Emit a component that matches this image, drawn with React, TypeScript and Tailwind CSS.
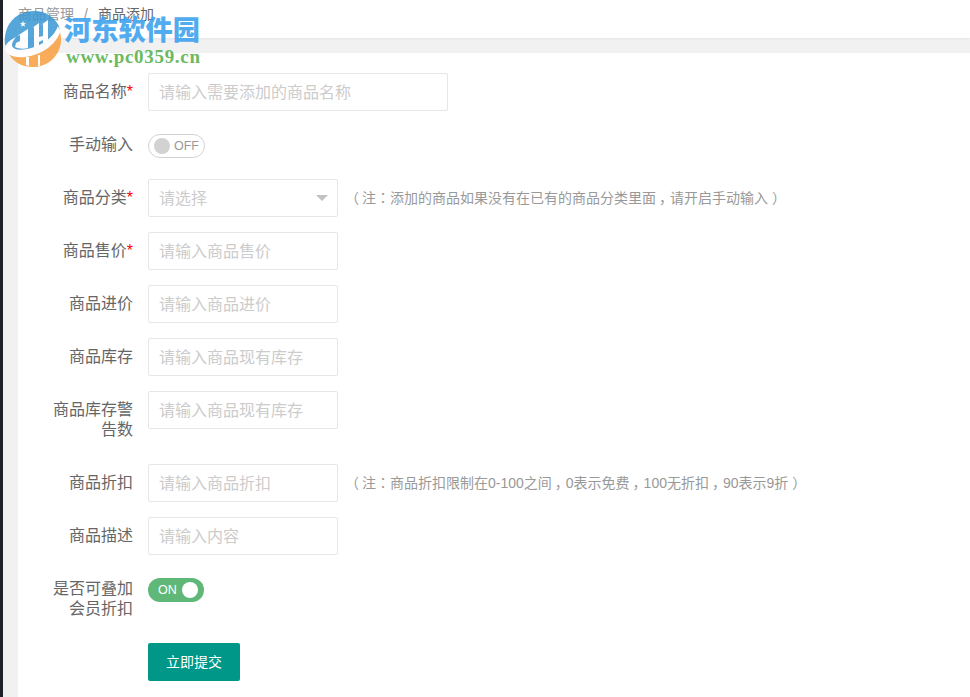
import type { ReactNode } from 'react'

interface FormRowProps {
  label: string
  required?: boolean
  children: ReactNode
}

function FormRow({ label, required, children }: FormRowProps) {
  return (
    <div className="flex items-start mb-[15px]">
      <label className="w-[110px] shrink-0 py-[9px] px-[15px] text-right text-[16px] leading-[20px] text-[#666]">
        {label}
        {required && <span className="text-[#f00]">*</span>}
      </label>
      <div className="flex items-center min-h-[38px]">{children}</div>
    </div>
  )
}

function TextInput({ placeholder, wide }: { placeholder: string; wide?: boolean }) {
  return (
    <input
      type="text"
      placeholder={placeholder}
      className={`${wide ? 'w-[300px]' : 'w-[190px]'} h-[38px] px-[10px] pt-[2px] border border-[#e6e6e6] rounded-[2px] bg-white text-[16px] placeholder:text-[#ccc] outline-none`}
    />
  )
}

function Hint({ children }: { children: ReactNode }) {
  return (
    <span className="ml-[7px] pb-[2px] text-[14px] leading-[20px] text-[#999] whitespace-nowrap">
      <span className="mr-[3px]">（</span>
      {children}
      <span className="ml-[4px]">）</span>
    </span>
  )
}

// Comma moved towards the middle of its box
function Comma() {
  return <span className="ml-[3px] -mr-[3px]">，</span>
}

function Colon() {
  return (
    <span lang="zh-TW" className="font-['Noto_Sans_CJK_TC',sans-serif]">
      ：
    </span>
  )
}

function Switch({ on }: { on?: boolean }) {
  if (on) {
    return (
      <div className="flex items-center justify-between w-[56px] h-[24px] mt-[2px] pl-[10px] pr-[6px] rounded-full bg-[#5fb878]">
        <span className="text-[12.5px] text-white">ON</span>
        <span className="w-[16px] h-[16px] rounded-full bg-white" />
      </div>
    )
  }
  return (
    <div className="flex items-center justify-between w-[57px] h-[24px] mt-[2px] pl-[5px] pr-[5px] border border-[#d2d2d2] rounded-full bg-white">
      <span className="w-[16px] h-[16px] rounded-full bg-[#d2d2d2]" />
      <span className="text-[12.5px] text-[#999]">OFF</span>
    </div>
  )
}

function Watermark() {
  return (
    <div className="absolute left-[4px] top-[10px] flex pointer-events-none">
      <svg width="60" height="58" viewBox="0 0 60 58" className="shrink-0 opacity-85">
        <path d="M1 34C-1 15 12 1 30 1c12 0 20 6 25 15 2 12-10 23-28 27-14 2-25-2-26-9z" fill="#3a97d3" />
        <path d="M4 42c8 4 20 4 32-2 9-4 16-10 20-18 5 17-8 35-27 35C17 57 8 51 4 42z" fill="#f99f3f" />
        <path
          d="M12 27C4 31 1 35 1 39c1 6 9 9 20 8 16-2 31-12 35-25l-2-6c-4 11-15 19-27 22-10 3-19 2-19-3 0-3 2-5 4-8z"
          fill="#fff"
        />
        <path d="M11 37l1-4 4-2v-6l-3 1 11-7v19c-4 1-9 1-13-1z" fill="#fff" />
        <path d="M28 18l7-5v14l4-1V14l-2 1 7-5v22l-5 4v-6l-4 2v6l-5 2V17z" fill="#fff" />
        <path d="M22 47h3v9l-3-1zM34 45h2v11h-2z" fill="#fff" />
        <path d="M19 11l.8 2 2.2.2-1.7 1.4.6 2.2-1.9-1.2-1.9 1.2.6-2.2-1.7-1.4 2.2-.2z" fill="#fff" />
      </svg>
      <div className="pt-[6px] whitespace-nowrap opacity-90">
        <div className="text-[27.2px] leading-[30px] font-black text-[#3fa2ee]">河东软件园</div>
        <div className="pl-[2px] font-['Liberation_Serif',serif] text-[19px] leading-[22px] font-bold text-[#5cb34e] tracking-[0.7px]">
          www.pc0359.cn
        </div>
      </div>
    </div>
  )
}

export default function App() {
  return (
    <div className="relative flex h-[697px] overflow-hidden bg-[#f1f1f1] font-['Liberation_Sans','Noto_Sans_CJK_SC',sans-serif]">
      <div className="w-[3px] shrink-0 bg-[#20222a]" />
      <div className="flex-1 flex flex-col">
        <header className="h-[38px] shrink-0 pl-[15px] pt-[4px] bg-white text-[14px] leading-[20px] text-[#666] shadow-[0_1px_2px_rgba(0,0,0,0.05)]">
          <span className="text-[#999]">商品管理</span>
          <span className="mx-[10px] text-[#999]">/</span>
          <span>商品添加</span>
        </header>

        <main className="flex-1 mt-[15px] ml-[15px] p-[20px] bg-white">
          <FormRow label="商品名称" required>
            <TextInput placeholder="请输入需要添加的商品名称" wide />
          </FormRow>
          <FormRow label="手动输入">
            <Switch />
          </FormRow>
          <FormRow label="商品分类" required>
            <div className="flex items-center justify-between w-[190px] h-[38px] pl-[10px] pr-[9px] border border-[#e6e6e6] rounded-[2px] text-[16px] text-[#ccc]">
              <span className="pt-[2px]">请选择</span>
              <span className="border-x-[6px] border-t-[6px] border-x-transparent border-t-[#c2c2c2]" />
            </div>
            <Hint>
              注<Colon />添加的商品如果没有在已有的商品分类里面<Comma />请开启手动输入
            </Hint>
          </FormRow>
          <FormRow label="商品售价" required>
            <TextInput placeholder="请输入商品售价" />
          </FormRow>
          <FormRow label="商品进价">
            <TextInput placeholder="请输入商品进价" />
          </FormRow>
          <FormRow label="商品库存">
            <TextInput placeholder="请输入商品现有库存" />
          </FormRow>
          <FormRow label="商品库存警告数">
            <TextInput placeholder="请输入商品现有库存" />
          </FormRow>
          <FormRow label="商品折扣">
            <TextInput placeholder="请输入商品折扣" />
            <Hint>
              注<Colon />商品折扣限制在0-100之间<Comma />0表示免费<Comma />100无折扣<Comma />90表示9折
            </Hint>
          </FormRow>
          <FormRow label="商品描述">
            <TextInput placeholder="请输入内容" />
          </FormRow>
          <FormRow label="是否可叠加会员折扣">
            <Switch on />
          </FormRow>
          <button className="block ml-[110px] w-[92px] h-[38px] rounded-[2px] bg-[#009688] text-[14px] text-white">
            立即提交
          </button>
        </main>
      </div>
      <Watermark />
    </div>
  )
}
